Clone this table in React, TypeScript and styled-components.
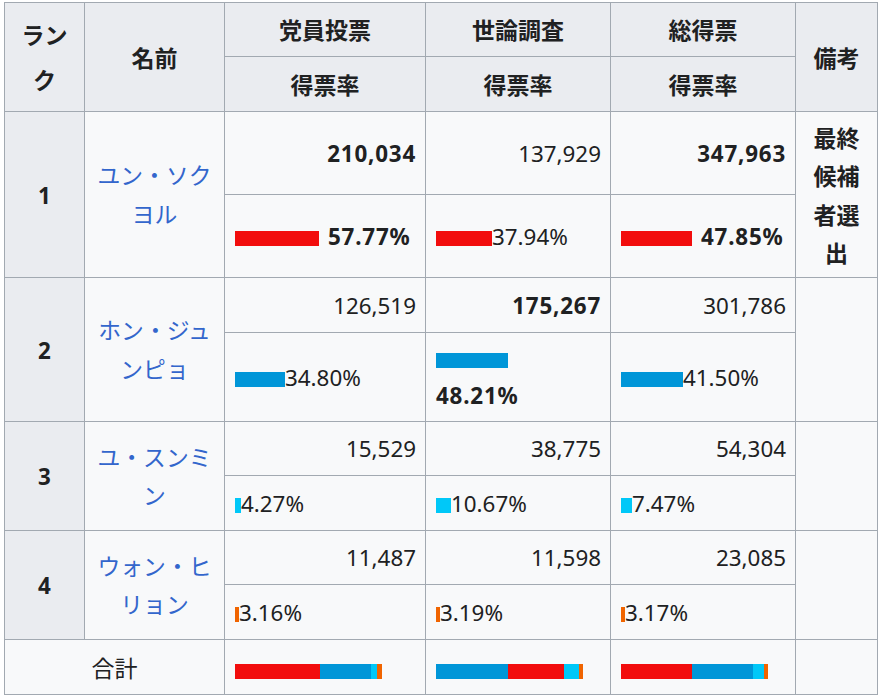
import React from 'react';
import styled, { createGlobalStyle } from 'styled-components';

const Global = createGlobalStyle`
  html, body { margin: 0; padding: 0; background: #ffffff; }
  body { font-family: "Noto Sans", "Noto Sans CJK JP", sans-serif; color: #202122; }
`;

const RED = '#f20d0d';
const BLUE = '#0096d8';
const CYAN = '#00c8f8';
const ORANGE = '#f06400';
const BORDER = '#a2a9b1';

const Table = styled.table`
  margin: 2px 0 0 4px;
  border-collapse: collapse;
  table-layout: fixed;
  width: 873px;
  font-size: 22.4px;
  line-height: 37px;
  background: #f8f9fa;
  color: #202122;
`;

const Col = styled.col<{ $w: number }>`
  width: ${(p) => p.$w}px;
`;

const Row = styled.tr<{ $h: number }>`
  height: ${(p) => p.$h}px;
`;

const HeadCell = styled.th<{ $lh?: number }>`
  background: #eaecf0;
  border: 1px solid ${BORDER};
  padding: 4.5px 9px;
  font-family: "Noto Sans CJK JP", "Noto Sans", sans-serif;
  font-size: 23px;
  font-weight: 700;
  text-align: center;
  vertical-align: middle;
  line-height: ${(p) => p.$lh ?? 37}px;
`;

const RankCell = styled.th`
  background: #eaecf0;
  border: 1px solid ${BORDER};
  padding: 6px 9px 4.5px;
  font-weight: 700;
  text-align: center;
  vertical-align: middle;
`;

const NameCell = styled.td`
  border: 1px solid ${BORDER};
  padding: 4.5px 9px;
  text-align: center;
  vertical-align: middle;
  font-family: "Noto Sans CJK JP", sans-serif;
  font-size: 22.8px;
  line-height: 38.5px;
  color: #3366cc;
`;

const NumCell = styled.td<{ $bold?: boolean }>`
  border: 1px solid ${BORDER};
  padding: 4.5px 9px;
  text-align: right;
  vertical-align: middle;
  font-weight: ${(p) => (p.$bold ? 700 : 400)};
  letter-spacing: ${(p) => (p.$bold ? '0.8px' : '0')};
`;

const BarCell = styled.td<{ $bold?: boolean }>`
  border: 1px solid ${BORDER};
  padding: 4.5px 9px 4.5px 10px;
  text-align: left;
  vertical-align: middle;
  white-space: nowrap;
  font-weight: ${(p) => (p.$bold ? 700 : 400)};
  letter-spacing: ${(p) => (p.$bold ? '0.8px' : '0')};
`;

const RemarkCell = styled.td`
  border: 1px solid ${BORDER};
  padding: 4.5px 9px;
  text-align: center;
  vertical-align: middle;
  font-family: "Noto Sans CJK JP", sans-serif;
  font-size: 23px;
  line-height: 38.5px;
  font-weight: 700;
`;

const TotalLabel = styled.td`
  border: 1px solid ${BORDER};
  padding: 4.5px 9px;
  text-align: center;
  vertical-align: middle;
  font-family: "Noto Sans CJK JP", sans-serif;
  font-size: 23px;
`;

const Bar = styled.span<{ $c: string }>`
  display: inline-block;
  height: 15px;
  vertical-align: -1px;
  background: ${(p) => p.$c};
`;

const BoldGap = styled.span`
  display: inline-block;
  width: 9px;
`;

const Stack = styled.span`
  display: inline-flex;
  height: 15px;
  vertical-align: -3px;
`;

const Seg = styled.span<{ $c: string }>`
  display: block;
  height: 100%;
  background: ${(p) => p.$c};
`;

type Pct = { w: number; text: string; bold?: boolean; wrap?: boolean };
type Cand = {
  rank: number;
  name: string;
  color: string;
  nums: { v: string; bold?: boolean }[];
  pcts: Pct[];
  h: [number, number];
};

const cands: Cand[] = [
  {
    rank: 1,
    name: 'ユン・ソクヨル',
    color: RED,
    nums: [{ v: '210,034', bold: true }, { v: '137,929' }, { v: '347,963', bold: true }],
    pcts: [
      { w: 84, text: '57.77%', bold: true },
      { w: 56, text: '37.94%' },
      { w: 71, text: '47.85%', bold: true },
    ],
    h: [83, 83],
  },
  {
    rank: 2,
    name: 'ホン・ジュンピョ',
    color: BLUE,
    nums: [{ v: '126,519' }, { v: '175,267', bold: true }, { v: '301,786' }],
    pcts: [
      { w: 50, text: '34.80%' },
      { w: 72, text: '48.21%', bold: true, wrap: true },
      { w: 62, text: '41.50%' },
    ],
    h: [55, 89],
  },
  {
    rank: 3,
    name: 'ユ・スンミン',
    color: CYAN,
    nums: [{ v: '15,529' }, { v: '38,775' }, { v: '54,304' }],
    pcts: [
      { w: 6, text: '4.27%' },
      { w: 15, text: '10.67%' },
      { w: 11, text: '7.47%' },
    ],
    h: [54, 55],
  },
  {
    rank: 4,
    name: 'ウォン・ヒリョン',
    color: ORANGE,
    nums: [{ v: '11,487' }, { v: '11,598' }, { v: '23,085' }],
    pcts: [
      { w: 4, text: '3.16%' },
      { w: 4, text: '3.19%' },
      { w: 4, text: '3.17%' },
    ],
    h: [54, 55],
  },
];

const totals: { c: string; w: number }[][] = [
  [
    { c: RED, w: 85 },
    { c: BLUE, w: 51 },
    { c: CYAN, w: 6 },
    { c: ORANGE, w: 5 },
  ],
  [
    { c: BLUE, w: 72 },
    { c: RED, w: 56 },
    { c: CYAN, w: 15 },
    { c: ORANGE, w: 4 },
  ],
  [
    { c: RED, w: 71 },
    { c: BLUE, w: 61 },
    { c: CYAN, w: 11 },
    { c: ORANGE, w: 4 },
  ],
];

function PctCell({ p, color }: { p: Pct; color: string }) {
  return (
    <BarCell $bold={p.bold}>
      <Bar $c={color} style={{ width: p.w }} />
      {p.wrap ? <br /> : p.bold ? <BoldGap /> : null}
      {p.text}
    </BarCell>
  );
}

export default function App() {
  return (
    <>
      <Global />
      <Table>
        <colgroup>
          <Col $w={80} />
          <Col $w={140} />
          <Col $w={201} />
          <Col $w={185} />
          <Col $w={185} />
          <Col $w={82} />
        </colgroup>
        <thead>
          <Row $h={54}>
            <HeadCell rowSpan={2} $lh={45}>ランク</HeadCell>
            <HeadCell rowSpan={2}>名前</HeadCell>
            <HeadCell>党員投票</HeadCell>
            <HeadCell>世論調査</HeadCell>
            <HeadCell>総得票</HeadCell>
            <HeadCell rowSpan={2}>備考</HeadCell>
          </Row>
          <Row $h={55}>
            <HeadCell>得票率</HeadCell>
            <HeadCell>得票率</HeadCell>
            <HeadCell>得票率</HeadCell>
          </Row>
        </thead>
        <tbody>
          {cands.map((c) => (
            <React.Fragment key={c.rank}>
              <Row $h={c.h[0]}>
                <RankCell rowSpan={2}>{c.rank}</RankCell>
                <NameCell rowSpan={2}>{c.name}</NameCell>
                {c.nums.map((n, i) => (
                  <NumCell key={i} $bold={n.bold}>
                    {n.v}
                  </NumCell>
                ))}
                <RemarkCell rowSpan={2}>{c.rank === 1 ? '最終候補者選出' : ''}</RemarkCell>
              </Row>
              <Row $h={c.h[1]}>
                {c.pcts.map((p, i) => (
                  <PctCell key={i} p={p} color={c.color} />
                ))}
              </Row>
            </React.Fragment>
          ))}
          <Row $h={55}>
            <TotalLabel colSpan={2}>合計</TotalLabel>
            {totals.map((segs, i) => (
              <BarCell key={i}>
                <Stack>
                  {segs.map((s, j) => (
                    <Seg key={j} $c={s.c} style={{ width: s.w }} />
                  ))}
                </Stack>
              </BarCell>
            ))}
            <RemarkCell />
          </Row>
        </tbody>
      </Table>
    </>
  );
}
